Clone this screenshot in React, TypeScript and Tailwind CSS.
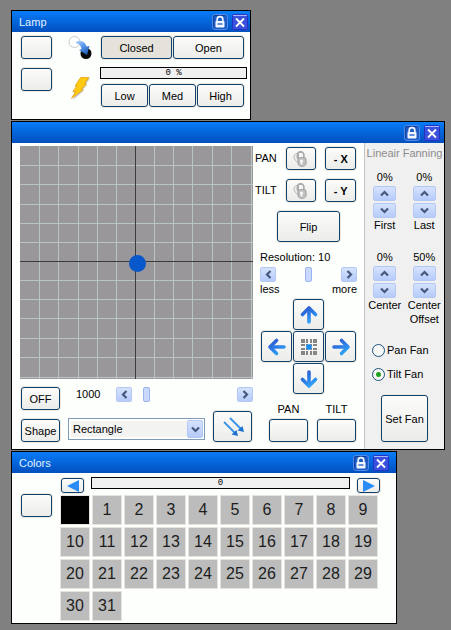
import { useState } from "react";
import type { ReactNode } from "react";

const btn =
  "flex items-center justify-center rounded-[3px] border border-[#10406c] bg-linear-to-b from-[#fbfbfa] to-[#ececea] shadow-[0_0_0_1px_#ece9e0] leading-[14px] active:bg-none active:bg-[#e2dfd6]";

const blueBtn =
  "flex items-center justify-center rounded-[2px] border border-[#b4c8f4] bg-linear-to-b from-[#d6e2fe] to-[#b6cbfa] text-[#45587c]";

function Chevron({ className = "" }: { className?: string }) {
  return (
    <svg viewBox="0 0 9 9" className={`size-[9px] ${className}`} fill="none" stroke="currentColor" strokeWidth="2.2">
      <path d="M1 6.5 4.5 3 8 6.5" />
    </svg>
  );
}

function LockBadge() {
  return (
    <svg viewBox="0 0 16 16" className="size-4">
      <rect x="0.5" y="0.5" width="15" height="15" rx="2.5" fill="#1c5cc4" stroke="#4f8be6" />
      <path d="M1.500 13V3A1.500 1.500 0 0 1 3 1.500h10" fill="none" stroke="#123f9c" />
      <path d="M5.200 8V5.200a2.800 2.500 0 0 1 5.600 0V8" fill="none" stroke="#f2f7ff" strokeWidth="1.7" />
      <rect x="3.500" y="7" width="9" height="6.500" rx="0.800" fill="#f2f7ff" />
      <path d="M5.500 10h5" stroke="#2c62c8" strokeWidth="1.4" />
    </svg>
  );
}

function CloseBadge() {
  return (
    <svg viewBox="0 0 16 16" className="size-4">
      <rect x="0.5" y="0.5" width="15" height="15" rx="1" fill="#3b50dc" stroke="#2433c4" />
      <path d="M1 1.500h14" stroke="#a9b8f8" />
      <path d="m4 4.500 8 8M12 4.500l-8 8" stroke="#fff" strokeWidth="1.8" />
    </svg>
  );
}

function Panel({
  title,
  className,
  barClass,
  children,
}: {
  title: string;
  className: string;
  barClass: string;
  children: ReactNode;
}) {
  return (
    <section className={`w-full border border-black bg-[#fdfffc] ${className}`}>
      <header
        className={`flex h-[21px] items-center gap-1 bg-linear-to-b from-[#0a7cf8] to-[#034fbe] pl-[7px] text-[#e2f2ff] ${barClass}`}
      >
        <h2 className="flex-1">{title}</h2>
        <button type="button" aria-label="Lock window">
          <LockBadge />
        </button>
        <button type="button" aria-label="Close window">
          <CloseBadge />
        </button>
      </header>
      {children}
    </section>
  );
}

function Meter({ label, text }: { label: string; text: string }) {
  return (
    <div
      role="progressbar"
      aria-label={label}
      aria-valuenow={0}
      className="h-3 flex-1 border border-black bg-[#f0f0f0] text-center font-['Liberation_Mono'] text-[9px] leading-[10px]"
    >
      {text}
    </div>
  );
}

function Scroll({ label, value, max }: { label: string; value: number; max: number }) {
  const [current, setCurrent] = useState(value);
  return (
    <div className="flex h-[15px] items-stretch gap-[9px]">
      <button type="button" aria-label={`${label} down`} className={`${blueBtn} w-4`} onClick={() => setCurrent(Math.max(0, current - 1))}>
        <Chevron className="-rotate-90" />
      </button>
      <input
        type="range"
        aria-label={label}
        min={0}
        max={max}
        value={current}
        onChange={(e) => setCurrent(Number(e.target.value))}
        className="w-0 flex-1 appearance-none bg-transparent [&::-webkit-slider-thumb]:h-[15px] [&::-webkit-slider-thumb]:w-[7px] [&::-webkit-slider-thumb]:appearance-none [&::-webkit-slider-thumb]:rounded-[2px] [&::-webkit-slider-thumb]:border [&::-webkit-slider-thumb]:border-[#9db5ee] [&::-webkit-slider-thumb]:bg-[#c8d8fe]"
      />
      <button type="button" aria-label={`${label} up`} className={`${blueBtn} w-4`} onClick={() => setCurrent(Math.min(max, current + 1))}>
        <Chevron className="rotate-90" />
      </button>
    </div>
  );
}

function Spinner({ start, children }: { start: number; children: ReactNode }) {
  const [value, setValue] = useState(start);
  return (
    <div className="flex flex-1 flex-col items-center text-center">
      <output className="mb-[2px]">{value}%</output>
      <button type="button" aria-label="Increase" className={`${blueBtn} mb-[2px] h-[15px] w-[23px]`} onClick={() => setValue(value + 1)}>
        <Chevron />
      </button>
      <button type="button" aria-label="Decrease" className={`${blueBtn} h-[15px] w-[23px]`} onClick={() => setValue(value - 1)}>
        <Chevron className="rotate-180" />
      </button>
      <span>{children}</span>
    </div>
  );
}

function PadlockIcon() {
  return (
    <svg viewBox="0 0 18 18" className="size-[18px]">
      <path d="M6.500 10V3.800a3.200 3.200 0 0 0-4.500 3c0 3 2 5 4.500 5.500" fill="#ededed" stroke="#b8b8b8" />
      <path d="M5.500 8.500V5a3.200 3.200 0 0 1 6.400 0v3.500" fill="none" stroke="#aaa" strokeWidth="1.7" />
      <path d="M6 8.500c3-1.500 6-1 8 0v5.500c-1 3-7 3-8 0z" fill="#c2c2c2" stroke="#9c9c9c" />
      <circle cx="9.500" cy="11" r="1.500" fill="#fafafa" />
      <path d="M9.500 11v3.500" stroke="#fafafa" strokeWidth="1.500" />
    </svg>
  );
}

function ArrowIcon({ id, from, to }: { id: string; from: string; to: string }) {
  return (
    <svg viewBox="0 0 20 20" className="size-5" fill="none">
      <defs>
        <linearGradient id={id} x1="3" y1="1" x2="14" y2="19" gradientUnits="userSpaceOnUse">
          <stop stopColor="#3350c4" />
          <stop offset="0.500" stopColor="#2b7ae4" />
          <stop offset="1" stopColor="#33b4ff" />
        </linearGradient>
      </defs>
      <path d={from} stroke={`url(#${id})`} strokeWidth="3.600" strokeLinecap="round" />
      <path d={to} stroke={`url(#${id})`} strokeWidth="3.600" strokeLinecap="round" strokeLinejoin="round" />
    </svg>
  );
}

function CenterIcon() {
  return (
    <svg viewBox="0 0 16 16" className="size-4" shapeRendering="crispEdges">
      <path
        d="M0 0h4v4H0zM5 0h2v4H5zM9 0h2v4H9zM12 0h4v4h-4zM0 5h4v2H0zM12 5h4v2h-4zM5 5h2v2H5zM9 5h2v2H9zM0 9h4v2H0zM12 9h4v2h-4zM5 9h2v2H5zM9 9h2v2H9zM0 12h4v4H0zM5 12h2v4H5zM9 12h2v4H9zM12 12h4v4h-4z"
        fill="#868686"
      />
      <circle cx="8" cy="8" r="2.800" fill="#168cf2" shapeRendering="auto" />
    </svg>
  );
}

function LampPanel() {
  return (
    <Panel title="Lamp" className="max-w-[240px]" barClass="pr-[2px]">
      <div className="flex pt-1 pr-[3px] pb-3 pl-[9px]">
        <div className="flex flex-col gap-[9px]">
          <button type="button" aria-label="Select shutter" className={`${btn} h-[23px] w-[31px]`} />
          <button type="button" aria-label="Select strobe" className={`${btn} h-[23px] w-[31px]`} />
        </div>
        <div className="flex w-12 flex-col items-center gap-4 pl-[7px]">
          <svg viewBox="0 0 24 24" className="size-6">
            <defs>
              <linearGradient id="shutter" x1="7" y1="4" x2="18" y2="18" gradientUnits="userSpaceOnUse">
                <stop stopColor="#cfe2ff" />
                <stop offset="0.500" stopColor="#5e9bf0" />
                <stop offset="1" stopColor="#2260b8" />
              </linearGradient>
            </defs>
            <circle cx="6.500" cy="6" r="5.500" fill="#fff" stroke="#c8c8c8" />
            <circle cx="18" cy="17.500" r="5.500" fill="#080808" />
            <path d="M8 5.500c5-2 9 0 10.500 5l3-.5-2.500 9-8-5 2.500-1C13 9.500 11 7.500 8 7.500z" fill="url(#shutter)" />
          </svg>
          <svg viewBox="0 0 20 24" className="h-6 w-5">
            <path d="M11.500 2.500H20l-4.500 6 1.500.5-4.500 5 1.500.5L3 24l3-7H3.500l3.500-5.500H5z" fill="#999" opacity="0.500" />
            <path d="M10.500 1.500H19L14.500 7.500l2 .5-5 5 1.800.5L1.500 22.500l4-7H2.800L7 10H5z" fill="#ffcb12" stroke="#e09a08" strokeWidth="0.700" />
          </svg>
        </div>
        <div className="flex flex-1 flex-col">
          <div className="flex gap-px pr-[3px] pl-px">
            <button type="button" aria-pressed="true" className={`${btn} h-[23px] flex-1 bg-none bg-[#e4e2da]`}>
              Closed
            </button>
            <button type="button" className={`${btn} h-[23px] flex-1`}>
              Open
            </button>
          </div>
          <div className="mt-2 mb-[5px] flex">
            <Meter label="Strobe" text="0 %" />
          </div>
          <div className="flex gap-px pr-[3px] pl-px">
            {["Low", "Med", "High"].map((speed) => (
              <button key={speed} type="button" className={`${btn} h-[23px] flex-1`}>
                {speed}
              </button>
            ))}
          </div>
        </div>
      </div>
    </Panel>
  );
}

const gridLines = [19, 38, 58, 77, 96, 134, 153, 172, 192, 211];

function PositionField() {
  return (
    <svg viewBox="0 0 233 233" className="h-auto w-full" role="img" aria-label="Pan and tilt position">
      <path d="M0 0h233v233H0z" fill="#999799" />
      {gridLines.map((n) => (
        <path key={n} d={`M${n + 0.5} 0v233M0 ${n + 0.5}h233`} stroke="#b9c4c4" />
      ))}
      <path d="M231.500 0v233M0 231.500h233" stroke="#b9c4c4" />
      <path d="M115.500 0v233M0 115.500h233" stroke="#3c3c3c" />
      <circle cx="117.500" cy="117.500" r="8.500" fill="#0858cc" />
    </svg>
  );
}

function PositionPanel() {
  const [fan, setFan] = useState("Tilt Fan");

  return (
    <Panel title="" className="" barClass="pr-1">
      <div className="flex">
        {/* Field and shape controls */}
        <div className="flex flex-1 flex-col pt-[3px] pb-[7px] pl-2">
          <PositionField />
          <div className="mt-2 mb-px flex pl-px">
            <button type="button" className={`${btn} h-[23px] w-[39px]`}>
              OFF
            </button>
            <span className="w-14 pl-4">1000</span>
            <div className="flex-1">
              <Scroll label="Speed" value={2} max={100} />
            </div>
          </div>
          <div className="flex items-end gap-2 px-px">
            <button type="button" className={`${btn} h-[23px] w-[39px]`}>
              Shape
            </button>
            <div className="relative mb-[2px] flex-1">
              <select
                aria-label="Shape"
                className="h-[22px] w-full appearance-none border border-[#7f9db9] bg-[#f3f3f2] px-1 leading-[14px] shadow-[inset_0_0_0_2px_#fff]"
              >
                <option>Rectangle</option>
              </select>
              <span className={`${blueBtn} pointer-events-none absolute inset-y-[2px] right-[2px] w-4`}>
                <Chevron className="rotate-180" />
              </span>
            </div>
            <button type="button" aria-label="Direction" className={`${btn} h-[31px] w-[39px]`}>
              <svg viewBox="0 0 24 22" className="h-[22px] w-6" fill="none" stroke="#3b93e6" strokeWidth="1.800">
                <path d="m3 6 11 11M9 2l11 11" />
                <path d="m17 20-6.500-1.500L15.500 14zM23 16l-6.500-1.500 5-4.500z" fill="#1f72d0" stroke="none" />
              </svg>
            </button>
          </div>
        </div>

        {/* Movement controls */}
        <div className="flex w-[111px] flex-col px-[7px] pt-1 pb-[7px]">
          <div className="-ml-[5px] flex flex-col gap-[9px]">
            {[
              ["PAN", "- X"],
              ["TILT", "- Y"],
            ].map(([axis, invert]) => (
              <div key={axis} className="flex gap-[9px] pr-px">
                <span className="flex-1 pt-1 leading-[14px]">{axis}</span>
                <button type="button" aria-label={`Lock ${axis}`} className={`${btn} h-[23px] w-[31px]`}>
                  <PadlockIcon />
                </button>
                <button type="button" className={`${btn} h-[23px] w-[31px] font-bold`}>
                  {invert}
                </button>
              </div>
            ))}
          </div>
          <button type="button" className={`${btn} mt-[9px] mb-2 h-[31px] w-[63px] self-center`}>
            Flip
          </button>
          <p className="mb-[3px]">Resolution: 10</p>
          <Scroll label="Resolution" value={5} max={10} />
          <div className="mb-[3px] flex justify-between">
            <span>less</span>
            <span>more</span>
          </div>
          <div className="grid grid-cols-[31px_31px_31px] grid-rows-[31px_31px_31px] justify-center gap-px">
            <button type="button" aria-label="Up" className={`${btn} col-start-2`}>
              <ArrowIcon id="up" from="M10 4v13" to="M3.500 9.500 10 3l6.500 6.500" />
            </button>
            <button type="button" aria-label="Left" className={`${btn} col-start-1`}>
              <ArrowIcon id="left" from="M4 10.010 17 10" to="M9.500 3.500 3 10l6.500 6.500" />
            </button>
            <button type="button" aria-label="Center" className={btn}>
              <CenterIcon />
            </button>
            <button type="button" aria-label="Right" className={btn}>
              <ArrowIcon id="right" from="M3 10.010 16 10" to="M10.500 3.500 17 10l-6.500 6.500" />
            </button>
            <button type="button" aria-label="Down" className={`${btn} col-start-2`}>
              <ArrowIcon id="down" from="M10 3v13" to="M3.500 10.500 10 17l6.500-6.500" />
            </button>
          </div>
          <div className="mt-2 flex justify-end gap-[9px] pr-px">
            {["PAN", "TILT"].map((axis) => (
              <label key={axis} className="flex w-[39px] flex-col gap-[3px] text-center">
                {axis}
                <button type="button" aria-label={axis} className={`${btn} h-[23px]`} />
              </label>
            ))}
          </div>
        </div>

        {/* Fanning */}
        <div className="flex w-20 flex-col border-l border-[#c4c4c4] bg-[#f0f0f0] pt-[3px] pb-[7px]">
          <h3 className="text-center whitespace-nowrap text-[#8c8c8c]">Lineair Fanning</h3>
          <div className="mt-[10px] flex">
            <Spinner start={0}>First</Spinner>
            <Spinner start={0}>Last</Spinner>
          </div>
          <div className="mt-[18px] flex">
            <Spinner start={0}>Center</Spinner>
            <Spinner start={50}>
              Center
              <br />
              Offset
            </Spinner>
          </div>
          <div className="mt-[17px] flex flex-col gap-[10px] pl-[7px]">
            {["Pan Fan", "Tilt Fan"].map((name) => (
              <label key={name} className="flex items-center gap-[2px]">
                <input
                  type="radio"
                  name="fan"
                  checked={fan === name}
                  onChange={() => setFan(name)}
                  className="size-[13px] appearance-none rounded-full border border-[#1f5280] bg-[#f6f6f4] checked:bg-[radial-gradient(circle,#21a121_0_2px,#f6f6f4_3px)]"
                />
                {name}
              </label>
            ))}
          </div>
          <button type="button" className={`${btn} mt-auto ml-4 h-[47px] w-[47px]`}>
            Set Fan
          </button>
        </div>
      </div>
    </Panel>
  );
}

function ColorsPanel() {
  return (
    <Panel title="Colors" className="max-w-[386px]" barClass="pr-[7px]">
      <div className="flex gap-[9px] pt-1 pr-4 pb-[3px] pl-[9px]">
        <button type="button" aria-label="Select color" className={`${btn} mt-[17px] h-[23px] w-[31px]`} />
        <div className="flex-1">
          <div className="flex gap-[7px]">
            <button type="button" aria-label="Previous color" className={`${btn} mt-px h-[15px] w-[23px]`}>
              <svg viewBox="0 0 12 12" className="size-3">
                <path d="M0 6 12 0v12z" fill="#2b8cf5" />
              </svg>
            </button>
            <Meter label="Color" text="0" />
            <button type="button" aria-label="Next color" className={`${btn} mt-px h-[15px] w-[23px]`}>
              <svg viewBox="0 0 12 12" className="size-3">
                <path d="M12 6 0 0v12z" fill="#2b8cf5" />
              </svg>
            </button>
          </div>
          <div className="mt-[3px] grid grid-cols-10 gap-1 pr-[3px]">
            {Array.from({ length: 32 }, (_, i) => (
              <button
                key={i}
                type="button"
                aria-label={`Color ${i}`}
                className={`h-7 text-base leading-7 text-[#1c1c1c] shadow-[0_0_0_1px_#e6e4de] ${i === 0 ? "bg-black" : "bg-[#bcbcbc]"}`}
              >
                {i > 0 && i}
              </button>
            ))}
          </div>
        </div>
      </div>
    </Panel>
  );
}

export default function App() {
  return (
    <main className="flex min-h-screen flex-col gap-px bg-[#808080] pt-[10px] pr-[6px] pb-[6px] pl-[11px] font-['Liberation_Sans',Arial,sans-serif] text-[11px] leading-[14px] text-black">
      <LampPanel />
      <PositionPanel />
      <ColorsPanel />
    </main>
  );
}
